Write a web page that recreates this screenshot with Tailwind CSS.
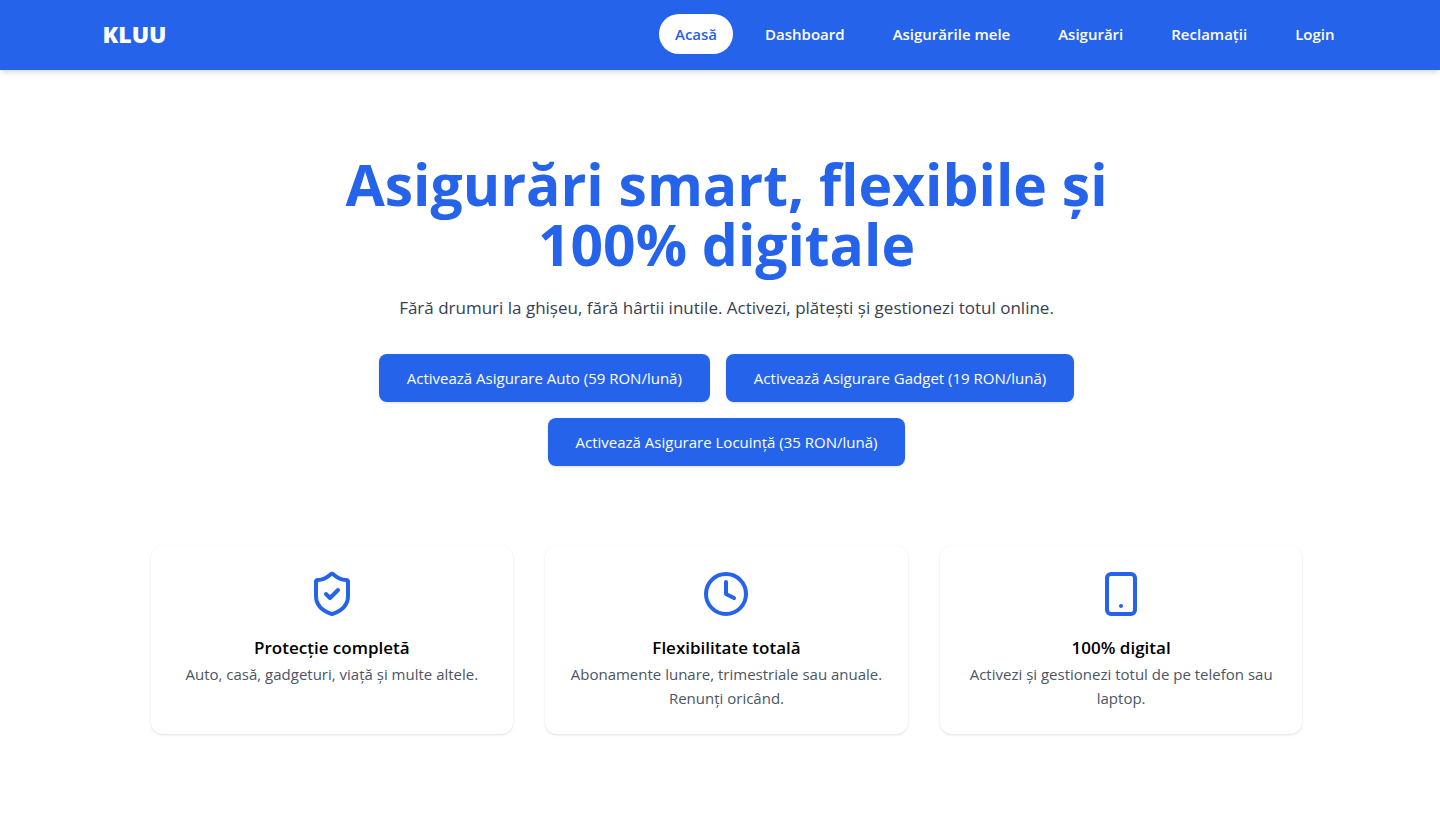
<!DOCTYPE html>
<html lang="ro">
<head>
    <meta charset="UTF-8">
    <meta name="viewport" content="width=device-width, initial-scale=1.0">
    <title>KLUU</title>
    <script src="https://cdn.jsdelivr.net/npm/@tailwindcss/browser@4"></script>
</head>
<body class="bg-white text-black font-['Segoe_UI','Open_Sans','Noto_Sans',sans-serif] overflow-x-hidden">
    <!-- Header -->
    <header class="bg-[#2563eb] text-white shadow-md pl-[13px]">
        <div class="max-w-7xl mx-auto px-4 pt-3.5 pb-4 flex items-center justify-between">
            <a href="#" class="text-[23px] leading-8 font-extrabold">KLUU</a>
            <nav class="flex gap-4 text-[15px] leading-6 font-semibold">
                <a href="#" class="px-4 py-2 rounded-full bg-white text-[#2563eb]">Acasă</a>
                <a href="#" class="px-4 py-2 rounded-full">Dashboard</a>
                <a href="#" class="px-4 py-2 rounded-full">Asigurările mele</a>
                <a href="#" class="px-4 py-2 rounded-full">Asigurări</a>
                <a href="#" class="px-4 py-2 rounded-full">Reclamații</a>
                <a href="#" class="px-4 py-2 rounded-full">Login</a>
            </nav>
        </div>
    </header>

    <main class="pl-[13px]">
        <!-- Hero -->
        <section class="max-w-4xl mx-auto pt-21 pb-20 text-center">
            <h1 class="text-[57px] leading-[60px] font-bold text-[#2563eb] mb-5">Asigurări smart, flexibile și 100% digitale</h1>
            <p class="text-[17px] leading-7 text-[#374151] mb-8">Fără drumuri la ghișeu, fără hârtii inutile. Activezi, plătești și gestionezi totul online.</p>
            <div class="flex flex-wrap justify-center gap-4 text-[15px] leading-6 text-white">
                <button type="button" class="bg-[#2563eb] px-7 py-3 rounded-lg shadow-sm">Activează Asigurare Auto (59 RON/lună)</button>
                <button type="button" class="bg-[#2563eb] px-7 py-3 rounded-lg shadow-sm">Activează Asigurare Gadget (19 RON/lună)</button>
                <button type="button" class="bg-[#2563eb] px-7 py-3 rounded-lg shadow-sm">Activează Asigurare Locuință (35 RON/lună)</button>
            </div>
        </section>

        <!-- Features -->
        <section class="max-w-6xl mx-auto pb-16 grid grid-cols-3 gap-8 text-center">
            <div class="bg-white rounded-xl shadow-sm p-6">
                <svg class="w-12 h-12 mx-auto mb-4 text-[#2563eb]" viewBox="0 0 24 24" fill="none" stroke="currentColor" stroke-width="2" stroke-linecap="round" stroke-linejoin="round">
                    <path d="M20 13c0 5-3.5 7.5-7.66 8.95a1 1 0 0 1-.67-.01C7.5 20.5 4 18 4 13V6a1 1 0 0 1 1-1c2 0 4.5-1.2 6.24-2.72a1.17 1.17 0 0 1 1.52 0C14.51 3.81 17 5 19 5a1 1 0 0 1 1 1z"/>
                    <path d="m9 12 2 2 4-4"/>
                </svg>
                <h3 class="text-[17px] leading-7 font-semibold">Protecție completă</h3>
                <p class="text-[15px] leading-6 text-[#4b5563]">Auto, casă, gadgeturi, viață și multe altele.</p>
            </div>
            <div class="bg-white rounded-xl shadow-sm p-6">
                <svg class="w-12 h-12 mx-auto mb-4 text-[#2563eb]" viewBox="0 0 24 24" fill="none" stroke="currentColor" stroke-width="2" stroke-linecap="round" stroke-linejoin="round">
                    <circle cx="12" cy="12" r="10"/>
                    <path d="M12 6v6l4 2"/>
                </svg>
                <h3 class="text-[17px] leading-7 font-semibold">Flexibilitate totală</h3>
                <p class="text-[15px] leading-6 text-[#4b5563]">Abonamente lunare, trimestriale sau anuale. Renunți oricând.</p>
            </div>
            <div class="bg-white rounded-xl shadow-sm p-6">
                <svg class="w-12 h-12 mx-auto mb-4 text-[#2563eb]" viewBox="0 0 24 24" fill="none" stroke="currentColor" stroke-width="2" stroke-linecap="round" stroke-linejoin="round">
                    <rect x="5" y="2" width="14" height="20" rx="2"/>
                    <path d="M12 18h.01"/>
                </svg>
                <h3 class="text-[17px] leading-7 font-semibold">100% digital</h3>
                <p class="text-[15px] leading-6 text-[#4b5563]">Activezi și gestionezi totul de pe telefon sau laptop.</p>
            </div>
        </section>
    </main>
</body>
</html>
